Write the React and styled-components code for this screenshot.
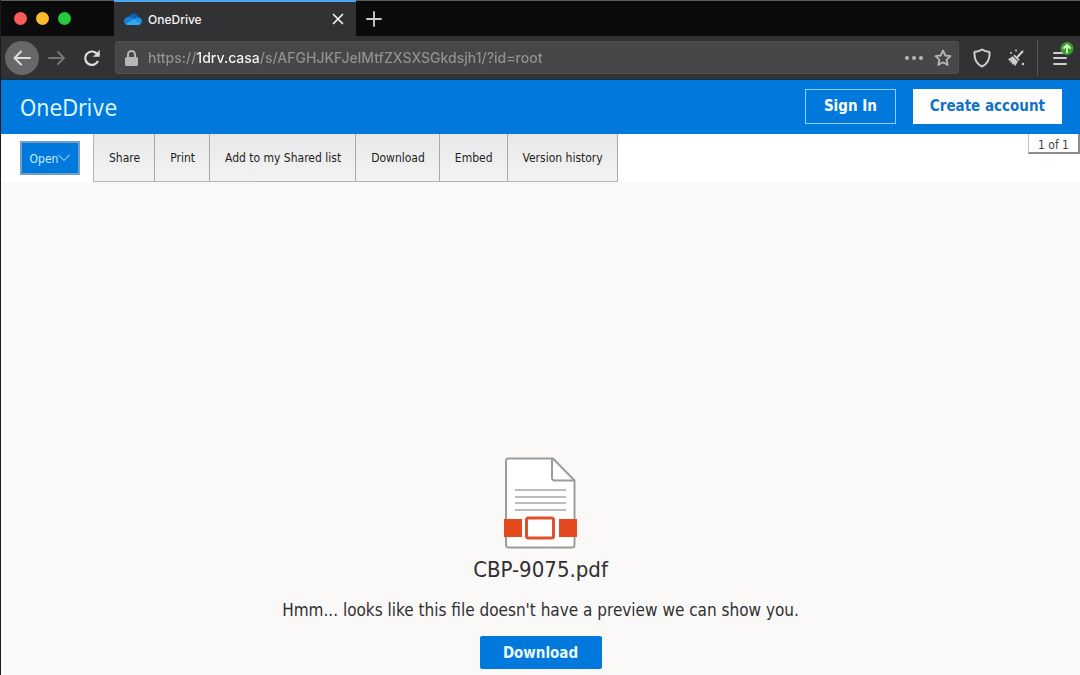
import React from "react";
import styled, { createGlobalStyle } from "styled-components";

const GlobalStyle = createGlobalStyle`
  * { box-sizing: border-box; }
  body { margin: 0; background: #faf9f8; }
  button, input { font: inherit; margin: 0; }
  svg { display: block; flex: none; }
`;

const tahoma = `"DejaVu Sans Condensed", "Noto Sans", sans-serif`;
const system = `Inter, "Liberation Sans", sans-serif`;

const Window = styled.div`
  min-height: 100vh;
  display: flex;
  flex-direction: column;
  border-left: 1px solid #1b1b1c;
`;

const TabStrip = styled.div`
  display: flex;
  height: 36px;
  background: #0b0b0c;
  border-top: 1px solid #5c5c5e;
  font-family: ${system};
`;

const WindowControls = styled.div`
  display: flex;
  align-items: center;
  gap: 9px;
  width: 113px;
  padding-left: 13px;
`;

const ControlDot = styled.button`
  width: 13px;
  height: 13px;
  padding: 0;
  border: 0;
  border-radius: 50%;
  background: ${(p) => p.$color};
`;

const Tab = styled.div`
  display: flex;
  align-items: center;
  width: 242px;
  margin-top: -1px;
  padding: 0 8px 0 10px;
  gap: 6px;
  background: #323234;
  border-top: 2px solid #4aa8ee;
  color: #f4f4f5;
  font-size: 12px;
  font-weight: 500;
`;

const TabTitle = styled.span`
  flex: 1;
`;

const IconButton = styled.button`
  display: flex;
  align-items: center;
  justify-content: center;
  flex: none;
  width: ${(p) => p.$size || 20}px;
  height: ${(p) => p.$size || 20}px;
  padding: 0;
  border: 0;
  border-radius: 50%;
  background: ${(p) => (p.$filled ? "#68686a" : "transparent")};
  color: ${(p) => p.$color || "#cfcfd1"};
`;

const NewTab = styled(IconButton)`
  align-self: center;
  margin-left: 8px;
`;

const NavBar = styled.div`
  display: flex;
  align-items: center;
  height: 44px;
  padding: 0 6px 0 4px;
  background: #323234;
  border-bottom: 1px solid #12304a;
  font-family: ${system};
`;

const HistoryButtons = styled.div`
  display: flex;
  align-items: center;
  gap: 8px;
  width: 110px;
`;

const AddressBar = styled.div`
  display: flex;
  flex: 1;
  align-items: center;
  gap: 9px;
  height: 33px;
  padding: 0 5px 0 8px;
  border: 1px solid #505052;
  border-radius: 3px;
  background: #474749;
  color: #b7b7b9;
`;

const Address = styled.input`
  flex: 1;
  min-width: 0;
  height: 24px;
  padding: 0;
  border: 0;
  outline: 0;
  font-size: 14px;
  font-weight: 500;
  color: transparent;
  caret-color: #fff;
  background: linear-gradient(90deg, #929294 48px, #fafafa 48px, #fafafa 111px, #929294 111px);
  -webkit-background-clip: text;
  background-clip: text;
`;

const Extensions = styled.div`
  display: flex;
  align-items: center;
  gap: 14px;
  padding: 0 11px 0 13px;
`;

const MenuArea = styled.div`
  display: flex;
  align-items: center;
  height: 36px;
  padding-left: 12px;
  border-left: 1px solid #555557;
`;

const Header = styled.header`
  display: flex;
  align-items: center;
  justify-content: space-between;
  height: 54px;
  padding: 0 18px 0 19px;
  background: #0078dc;
  font-family: ${tahoma};
`;

const Brand = styled.a`
  padding-top: 2px;
  color: #d8f4ff;
  font-size: 23px;
  line-height: 32px;
  text-decoration: none;
`;

const Account = styled.div`
  display: flex;
  gap: 17px;
  padding-bottom: 2px;
`;

const AccountButton = styled.button`
  height: 35px;
  padding: 0 ${(p) => (p.$solid ? 16 : 18)}px;
  border: 1px solid ${(p) => (p.$solid ? "#fff" : "#8fd2ff")};
  background: ${(p) => (p.$solid ? "#fff" : "transparent")};
  color: ${(p) => (p.$solid ? "#1373c4" : "#fff")};
  font-size: 15px;
  font-weight: 700;
  white-space: nowrap;
`;

const Toolbar = styled.div`
  display: flex;
  align-items: flex-start;
  height: 48px;
  padding-left: 19px;
  background: #fff;
  font-family: ${tahoma};
`;

const OpenButton = styled.button`
  display: flex;
  align-items: center;
  justify-content: center;
  width: 60px;
  height: 34px;
  margin: 7px 13px 0 0;
  padding: 2px 0 0;
  border: 2px solid #6f9fc4;
  background: #0078dc;
  color: #c9ecff;
  font-size: 12px;
`;

const Tools = styled.div`
  display: flex;
  flex: 1;
  border-left: 1px solid #b4b4b4;
`;

const ToolButton = styled.button`
  height: 48px;
  padding: 0 14px 0 15px;
  border: 0;
  border-right: 1px solid #a9a9a9;
  border-bottom: 1px solid #b4b4b4;
  background: linear-gradient(#e8e8e8, #f3f3f3);
  color: #1f1f1f;
  font-size: 12px;
  white-space: nowrap;
`;

const PageCount = styled.span`
  width: 52px;
  height: 20px;
  border: 1px solid #c4c4c4;
  border-width: 0 2px 2px 1px;
  border-right-color: #8c8c8c;
  border-bottom-color: #8c8c8c;
  color: #444;
  font-size: 12px;
  line-height: 22px;
  text-align: center;
`;

const Preview = styled.main`
  display: flex;
  flex: 1;
  flex-direction: column;
  align-items: center;
  justify-content: flex-end;
  padding: 24px 0 6px;
  font-family: ${tahoma};
  color: #303030;
`;

const FileName = styled.h1`
  margin: 5px 0 0;
  font-size: 22px;
  font-weight: 400;
  line-height: 32px;
`;

const Message = styled.p`
  margin: 12px 0 14px;
  font-size: 17px;
  line-height: 24px;
`;

const DownloadButton = styled.button`
  width: 122px;
  height: 33px;
  padding: 0;
  border: 0;
  border-radius: 2px;
  background: #0078dc;
  color: #eafaff;
  font-size: 15px;
  font-weight: 700;
`;

const Stroke = ({ w = 20, h = w, width = 2, children }) => (
  <svg width={w} height={h} viewBox={`0 0 ${w} ${h}`} fill="none" stroke="currentColor"
    strokeWidth={width} strokeLinecap="round" strokeLinejoin="round" aria-hidden="true">
    {children}
  </svg>
);

const CloudIcon = () => (
  <svg width="18" height="12" viewBox="0 0 18 12" aria-hidden="true">
    <path d="M4 5C5 1.500 8 0 10.500.5 13 1 14.300 2.800 14.600 4.500L9 8z" fill="#0a5fb8" />
    <path d="M4 4C1.500 4 0 6 0 8c0 1.600.8 2.700 1.800 3.300L11 6 7 4.200C6 3.700 5 3.700 4 4z" fill="#1581d4" />
    <path d="M14.500 4.500C12.500 4.300 11.500 5 10 6l6.500 4.800C17.500 10.200 18 9.300 18 8.200c0-2-1.500-3.600-3.500-3.700z" fill="#1a91e4" />
    <path d="M1.500 11L10 6l6.800 4.800c-.6.700-1.400 1.200-2.600 1.200H4c-1 0-1.900-.4-2.500-1z" fill="#31a9f2" />
  </svg>
);

const PdfFileIcon = () => (
  <svg width="75" height="92" viewBox="0 0 75 92" aria-hidden="true">
    <path d="M5 1.500H50L71.500 23.500V88a2.500 2.500 0 0 1-2.500 2.500H5.500A2.500 2.500 0 0 1 3 88V3.500a2 2 0 0 1 2-2z"
      fill="#fff" stroke="#9a9d9c" strokeWidth="2" />
    <path d="M49 1.500V21a2.500 2.500 0 0 0 2.500 2.500H71" fill="none" stroke="#9a9d9c" strokeWidth="2" />
    <path d="M12 33H63M12 40H63M12 46H63M12 53H63" stroke="#bdbdbd" strokeWidth="2" />
    <path d="M1 62H74V80H1z" fill="#fff" />
    <path d="M1 62H19V80H1zM56 62H74V80H56z" fill="#e34a1f" />
    <rect x="23.500" y="61" width="27" height="20" rx="2" fill="#fff" stroke="#e04f2c" strokeWidth="3" />
  </svg>
);

const tools = ["Share", "Print", "Add to my Shared list", "Download", "Embed", "Version history"];

export default function App() {
  return (
    <Window>
      <GlobalStyle />
      <TabStrip>
        <WindowControls>
          <ControlDot $color="#fc5b57" aria-label="Close window" />
          <ControlDot $color="#fcbb2f" aria-label="Minimize window" />
          <ControlDot $color="#27c93f" aria-label="Zoom window" />
        </WindowControls>
        <Tab>
          <CloudIcon />
          <TabTitle>OneDrive</TabTitle>
          <IconButton aria-label="Close tab" $color="#f4f4f5">
            <Stroke w={12} width={1.7}><path d="M1.500 1.500l9 9M10.500 1.500l-9 9" /></Stroke>
          </IconButton>
        </Tab>
        <NewTab aria-label="New tab">
          <Stroke w={16} width={1.8}><path d="M8 1v14M1 8h14" /></Stroke>
        </NewTab>
      </TabStrip>

      <NavBar>
        <HistoryButtons>
          <IconButton aria-label="Back" $size={34} $filled $color="#dededf">
            <Stroke w={20} width={2}><path d="M18 10H3M9 3.500L2.500 10 9 16.500" /></Stroke>
          </IconButton>
          <IconButton aria-label="Forward" $color="#77777a">
            <Stroke w={20} width={1.8}><path d="M2 10h15M11 4l6 6-6 6" /></Stroke>
          </IconButton>
          <IconButton aria-label="Reload" $size={34} $color="#dededf">
            <Stroke w={18} width={2.2}>
              <path d="M15 12A6.700 6.700 0 1 1 13.500 4.300L15.500 6.500" strokeLinecap="butt" />
              <path d="M16.500 1.500v6h-6z" fill="currentColor" strokeWidth="0.500" />
            </Stroke>
          </IconButton>
        </HistoryButtons>
        <AddressBar>
          <svg width="15" height="16" viewBox="0 0 15 16" aria-hidden="true">
            <rect x="1" y="7" width="13" height="9" rx="1.500" fill="#b7b7b9" />
            <path d="M4 8V4.500a3.500 3.500 0 0 1 7 0V8" fill="none" stroke="#b7b7b9" strokeWidth="2" />
          </svg>
          <Address aria-label="Address" defaultValue="https://1drv.casa/s/AFGHJKFJelMtfZXSXSGkdsjh1/?id=root" />
          <IconButton aria-label="Page actions">
            <svg width="18" height="4" viewBox="0 0 18 4" fill="#b7b7b9" aria-hidden="true">
              <circle cx="2" cy="2" r="2" /><circle cx="9" cy="2" r="2" /><circle cx="16" cy="2" r="2" />
            </svg>
          </IconButton>
          <IconButton aria-label="Bookmark" $color="#b7b7b9">
            <Stroke w={18} width={1.8}>
              <path d="M9 1.500l2.300 5 5.200.6-3.900 3.600 1.100 5.300L9 13.300 4.300 16l1.100-5.300L1.500 7.100l5.200-.6z" />
            </Stroke>
          </IconButton>
        </AddressBar>
        <Extensions>
          <IconButton aria-label="Protection">
            <Stroke w={18} h={20} width={2}>
              <path d="M9 1.500C11 3 13.500 3.800 16.500 4 17 11 14.500 16 9 18.500 3.500 16 1 11 1.500 4 4.500 3.800 7 3 9 1.500z" />
            </Stroke>
          </IconButton>
          <IconButton aria-label="Clean up">
            <svg width="18" height="18" viewBox="0 0 18 18" fill="currentColor" aria-hidden="true">
              <path d="M15.500 2.500L10.500 8" stroke="currentColor" strokeWidth="2" strokeLinecap="round" />
              <path d="M7.500 5.500l5.200 5.200-1.200 1.200-5.200-5.200z" />
              <path d="M5.700 7.300l5.200 5.200-2.600 4.500-1.300-.9.600-1.600-1.900 1.200-.9-1 .9-1.700-1.800.9-.9-.9 1.400-1.600-2.200.4L1 10.500z" />
              <circle cx="4" cy="4" r="1" /><circle cx="9" cy="1.500" r="1" /><circle cx="16" cy="15" r="1.300" />
            </svg>
          </IconButton>
        </Extensions>
        <MenuArea>
          <IconButton aria-label="Menu, update available" $size={24}>
            <svg width="24" height="32" viewBox="0 0 24 32" aria-hidden="true">
              <path d="M4 11h12M4 16h12M4 22h12" stroke="currentColor" strokeWidth="2" strokeLinecap="round" />
              <circle cx="17" cy="6.500" r="6.500" fill="#3c9f2b" />
              <path d="M17 10.500V3.500M14 6L17 3l3 3" fill="none" stroke="#d7ffc9" strokeWidth="1.800" strokeLinecap="round" strokeLinejoin="round" />
            </svg>
          </IconButton>
        </MenuArea>
      </NavBar>

      <Header>
        <Brand href="#">OneDrive</Brand>
        <Account>
          <AccountButton>Sign In</AccountButton>
          <AccountButton $solid>Create account</AccountButton>
        </Account>
      </Header>

      <Toolbar>
        <OpenButton>
          Open
          <Stroke w={12} h={12} width={1}><path d="M0.500 2l5.500 5.500L11.500 2" /></Stroke>
        </OpenButton>
        <Tools>
          {tools.map((t) => <ToolButton key={t}>{t}</ToolButton>)}
        </Tools>
        <PageCount>1 of 1</PageCount>
      </Toolbar>

      <Preview>
        <PdfFileIcon />
        <FileName>CBP-9075.pdf</FileName>
        <Message>Hmm... looks like this file doesn't have a preview we can show you.</Message>
        <DownloadButton>Download</DownloadButton>
      </Preview>
    </Window>
  );
}
